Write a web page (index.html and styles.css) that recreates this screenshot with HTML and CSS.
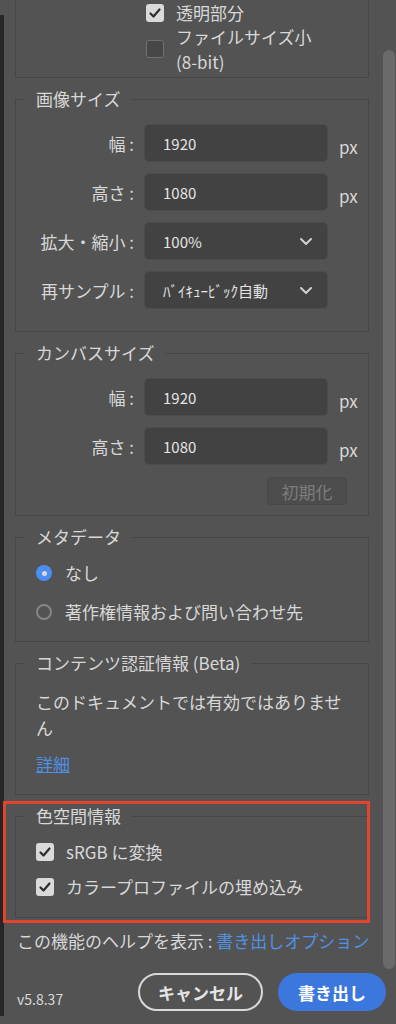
FILE: index.html
```html
<!DOCTYPE html>
<html lang="ja">
<head>
    <meta charset="UTF-8">
    <meta name="viewport" content="width=device-width, initial-scale=1.0">
    <title>書き出し形式</title>
    <link rel="stylesheet" href="styles.css">
</head>
<body>
    <div class="window">
        <div class="edge"></div>

        <div class="panel">
            <div class="group group-top">
                <div class="check row-short">
                    <span class="box on"><svg viewBox="0 0 18 18"><polyline points="4.5,9.5 7.5,12.5 13.5,5.5"/></svg></span>
                    <span>透明部分</span>
                </div>
                <div class="check row-tall">
                    <span class="box"></span>
                    <span>ファイルサイズ小<br>(8-bit)</span>
                </div>
            </div>

            <fieldset class="group size">
                <legend>画像サイズ</legend>
                <div class="form">
                    <span class="lbl">幅 :</span>
                    <input class="field" type="text" value="1920">
                    <span class="unit">px</span>

                    <span class="lbl">高さ :</span>
                    <input class="field" type="text" value="1080">
                    <span class="unit">px</span>

                    <span class="lbl">拡大・縮小 :</span>
                    <div class="field select">
                        <span>100%</span>
                        <svg viewBox="0 0 12 7"><polyline points="1,1 6,6 11,1"/></svg>
                    </div>
                    <span></span>

                    <span class="lbl">再サンプル :</span>
                    <div class="field select">
                        <span>ﾊﾞｲｷｭｰﾋﾞｯｸ自動</span>
                        <svg viewBox="0 0 12 7"><polyline points="1,1 6,6 11,1"/></svg>
                    </div>
                    <span></span>
                </div>
            </fieldset>

            <fieldset class="group canvas">
                <legend>カンバスサイズ</legend>
                <div class="form">
                    <span class="lbl">幅 :</span>
                    <input class="field" type="text" value="1920">
                    <span class="unit">px</span>

                    <span class="lbl">高さ :</span>
                    <input class="field" type="text" value="1080">
                    <span class="unit">px</span>
                </div>
                <div class="reset-row">
                    <button class="reset" disabled>初期化</button>
                </div>
            </fieldset>

            <fieldset class="group meta">
                <legend>メタデータ</legend>
                <div class="radio">
                    <span class="dot on"></span>
                    <span>なし</span>
                </div>
                <div class="radio">
                    <span class="dot"></span>
                    <span>著作権情報および問い合わせ先</span>
                </div>
            </fieldset>

            <fieldset class="group credit">
                <legend>コンテンツ認証情報 (Beta)</legend>
                <p class="note">このドキュメントでは有効ではありません</p>
                <a class="more" href="#">詳細</a>
            </fieldset>

            <div class="highlight">
                <fieldset class="group color">
                    <legend>色空間情報</legend>
                    <div class="check">
                        <span class="box on"><svg viewBox="0 0 18 18"><polyline points="4.5,9.5 7.5,12.5 13.5,5.5"/></svg></span>
                        <span>sRGB に変換</span>
                    </div>
                    <div class="check">
                        <span class="box on"><svg viewBox="0 0 18 18"><polyline points="4.5,9.5 7.5,12.5 13.5,5.5"/></svg></span>
                        <span>カラープロファイルの埋め込み</span>
                    </div>
                </fieldset>
            </div>

            <p class="help">この機能のヘルプを表示 : <a href="#">書き出しオプション</a></p>

            <div class="footer">
                <span class="version">v5.8.37</span>
                <div class="actions">
                    <button class="btn cancel">キャンセル</button>
                    <button class="btn export">書き出し</button>
                </div>
            </div>
        </div>
    </div>

    <div class="scrollbar"></div>
</body>
</html>
```

FILE: styles.css
```css
* {
    margin: 0;
    padding: 0;
    box-sizing: border-box;
}

body {
    background: #535353;
    color: #d8d8d8;
    font-family: "Noto Sans CJK JP", "Noto Sans", sans-serif;
    font-size: 17px;
    overflow: hidden;
}

.window {
    display: flex;
    width: 396px;
    height: 1024px;
}

.edge {
    width: 4px;
    height: 1001px;
    margin-top: 15px;
    background: #262626;
}

.panel {
    flex: 1;
    display: flex;
    flex-direction: column;
    padding: 0 10px 0 11px;
}

/* groups */

.group {
    width: 354px;
    border: 1px solid #474747;
    min-width: 0;
}

.group + .group,
.group + .highlight {
    margin-top: 10px;
}

.group legend {
    margin-left: -11px;
    padding: 0 11px;
    font-size: 17px;
    line-height: 22px;
    color: #d8d8d8;
}

.group-top {
    border-top: none;
    padding: 2px 0 3px 130px;
}

.size { padding: 14px 20px 22px; }
.canvas { padding: 14px 20px 10px; }
.meta { padding: 13px 20px 17px; }
.credit { padding: 15px 20px 17px; }
.color { padding: 13px 20px 18px; }

/* checkboxes */

.check {
    display: flex;
    align-items: center;
    gap: 12px;
    line-height: 24px;
}

.check + .check {
    margin-top: 11px;
}

.group-top .check + .check {
    margin-top: 0;
}

.row-short {
    line-height: 22px;
}

.row-tall {
    line-height: 25px;
}

.box {
    flex: none;
    width: 18px;
    height: 18px;
    border-radius: 3px;
    background: #474747;
    border: 1.5px solid #707070;
    display: flex;
    align-items: center;
    justify-content: center;
}

.box.on {
    background: #dadada;
    border: none;
}

.box svg {
    width: 18px;
    height: 18px;
    fill: none;
    stroke: #2e2e2e;
    stroke-width: 2.2;
    stroke-linecap: round;
    stroke-linejoin: round;
}

/* form rows */

.form {
    display: grid;
    grid-template-columns: 98px 184px auto;
    column-gap: 10px;
    row-gap: 11px;
    align-items: center;
}

.lbl {
    text-align: right;
    white-space: nowrap;
}

.unit {
    padding: 6px 0 0 1px;
}

.field {
    height: 38px;
    border: 1px solid #4c4c4c;
    border-radius: 5px;
    background: #424242;
    color: #e4e4e4;
    font-family: inherit;
    font-size: 15px;
    padding: 0 15px 0 18px;
    outline: none;
}

.select {
    display: flex;
    align-items: center;
    justify-content: space-between;
}

.select svg {
    width: 12px;
    height: 7px;
    fill: none;
    stroke: #cfcfcf;
    stroke-width: 2;
    stroke-linecap: round;
    stroke-linejoin: round;
}

.reset-row {
    display: flex;
    justify-content: flex-end;
    padding-right: 1px;
    margin-top: 12px;
}

.reset {
    width: 80px;
    height: 28px;
    border: 1px solid #474747;
    border-radius: 4px;
    background: #4d4d4d;
    color: #7c7c7c;
    font-family: inherit;
    font-size: 17px;
}

/* radios */

.radio {
    display: flex;
    align-items: center;
    gap: 13px;
    line-height: 24px;
}

.radio + .radio {
    margin-top: 15px;
}

.dot {
    flex: none;
    width: 16px;
    height: 16px;
    border-radius: 50%;
    border: 2px solid #858585;
}

.dot.on {
    border: none;
    background: #4b8df0;
    display: flex;
    align-items: center;
    justify-content: center;
}

.dot.on::after {
    content: "";
    width: 5px;
    height: 5px;
    border-radius: 50%;
    background: #d8d8d8;
}

/* credentials */

.note {
    line-height: 26px;
}

.more {
    display: inline-block;
    margin-top: 10px;
    line-height: 26px;
    color: #4f90e6;
}

/* red annotation box */

.highlight {
    position: relative;
}

.highlight::after {
    content: "";
    position: absolute;
    top: -4px;
    left: -12px;
    width: 361px;
    height: 116px;
    border: 3px solid #e4432d;
}

/* footer */

.help {
    margin-top: 11px;
    padding-left: 2px;
    line-height: 24px;
    white-space: nowrap;
}

.help a {
    color: #5192e4;
    text-decoration: none;
}

.footer {
    display: flex;
    justify-content: space-between;
    margin-top: 20px;
    padding-left: 2px;
}

.version {
    align-self: flex-end;
    margin-bottom: 2px;
    font-size: 14px;
    line-height: 20px;
}

.actions {
    display: flex;
    gap: 15px;
}

.btn {
    height: 38px;
    border-radius: 19px;
    font-family: inherit;
    font-size: 17px;
    font-weight: bold;
}

.cancel {
    width: 125px;
    border: 2px solid #d9d9d9;
    background: transparent;
    color: #e4e4e4;
}

.export {
    width: 108px;
    border: none;
    background: #3b77dc;
    color: #fff;
}

.scrollbar {
    position: absolute;
    top: 50px;
    left: 383px;
    width: 12px;
    height: 919px;
    border-radius: 6px;
    background: #6a6a6a;
}
```
